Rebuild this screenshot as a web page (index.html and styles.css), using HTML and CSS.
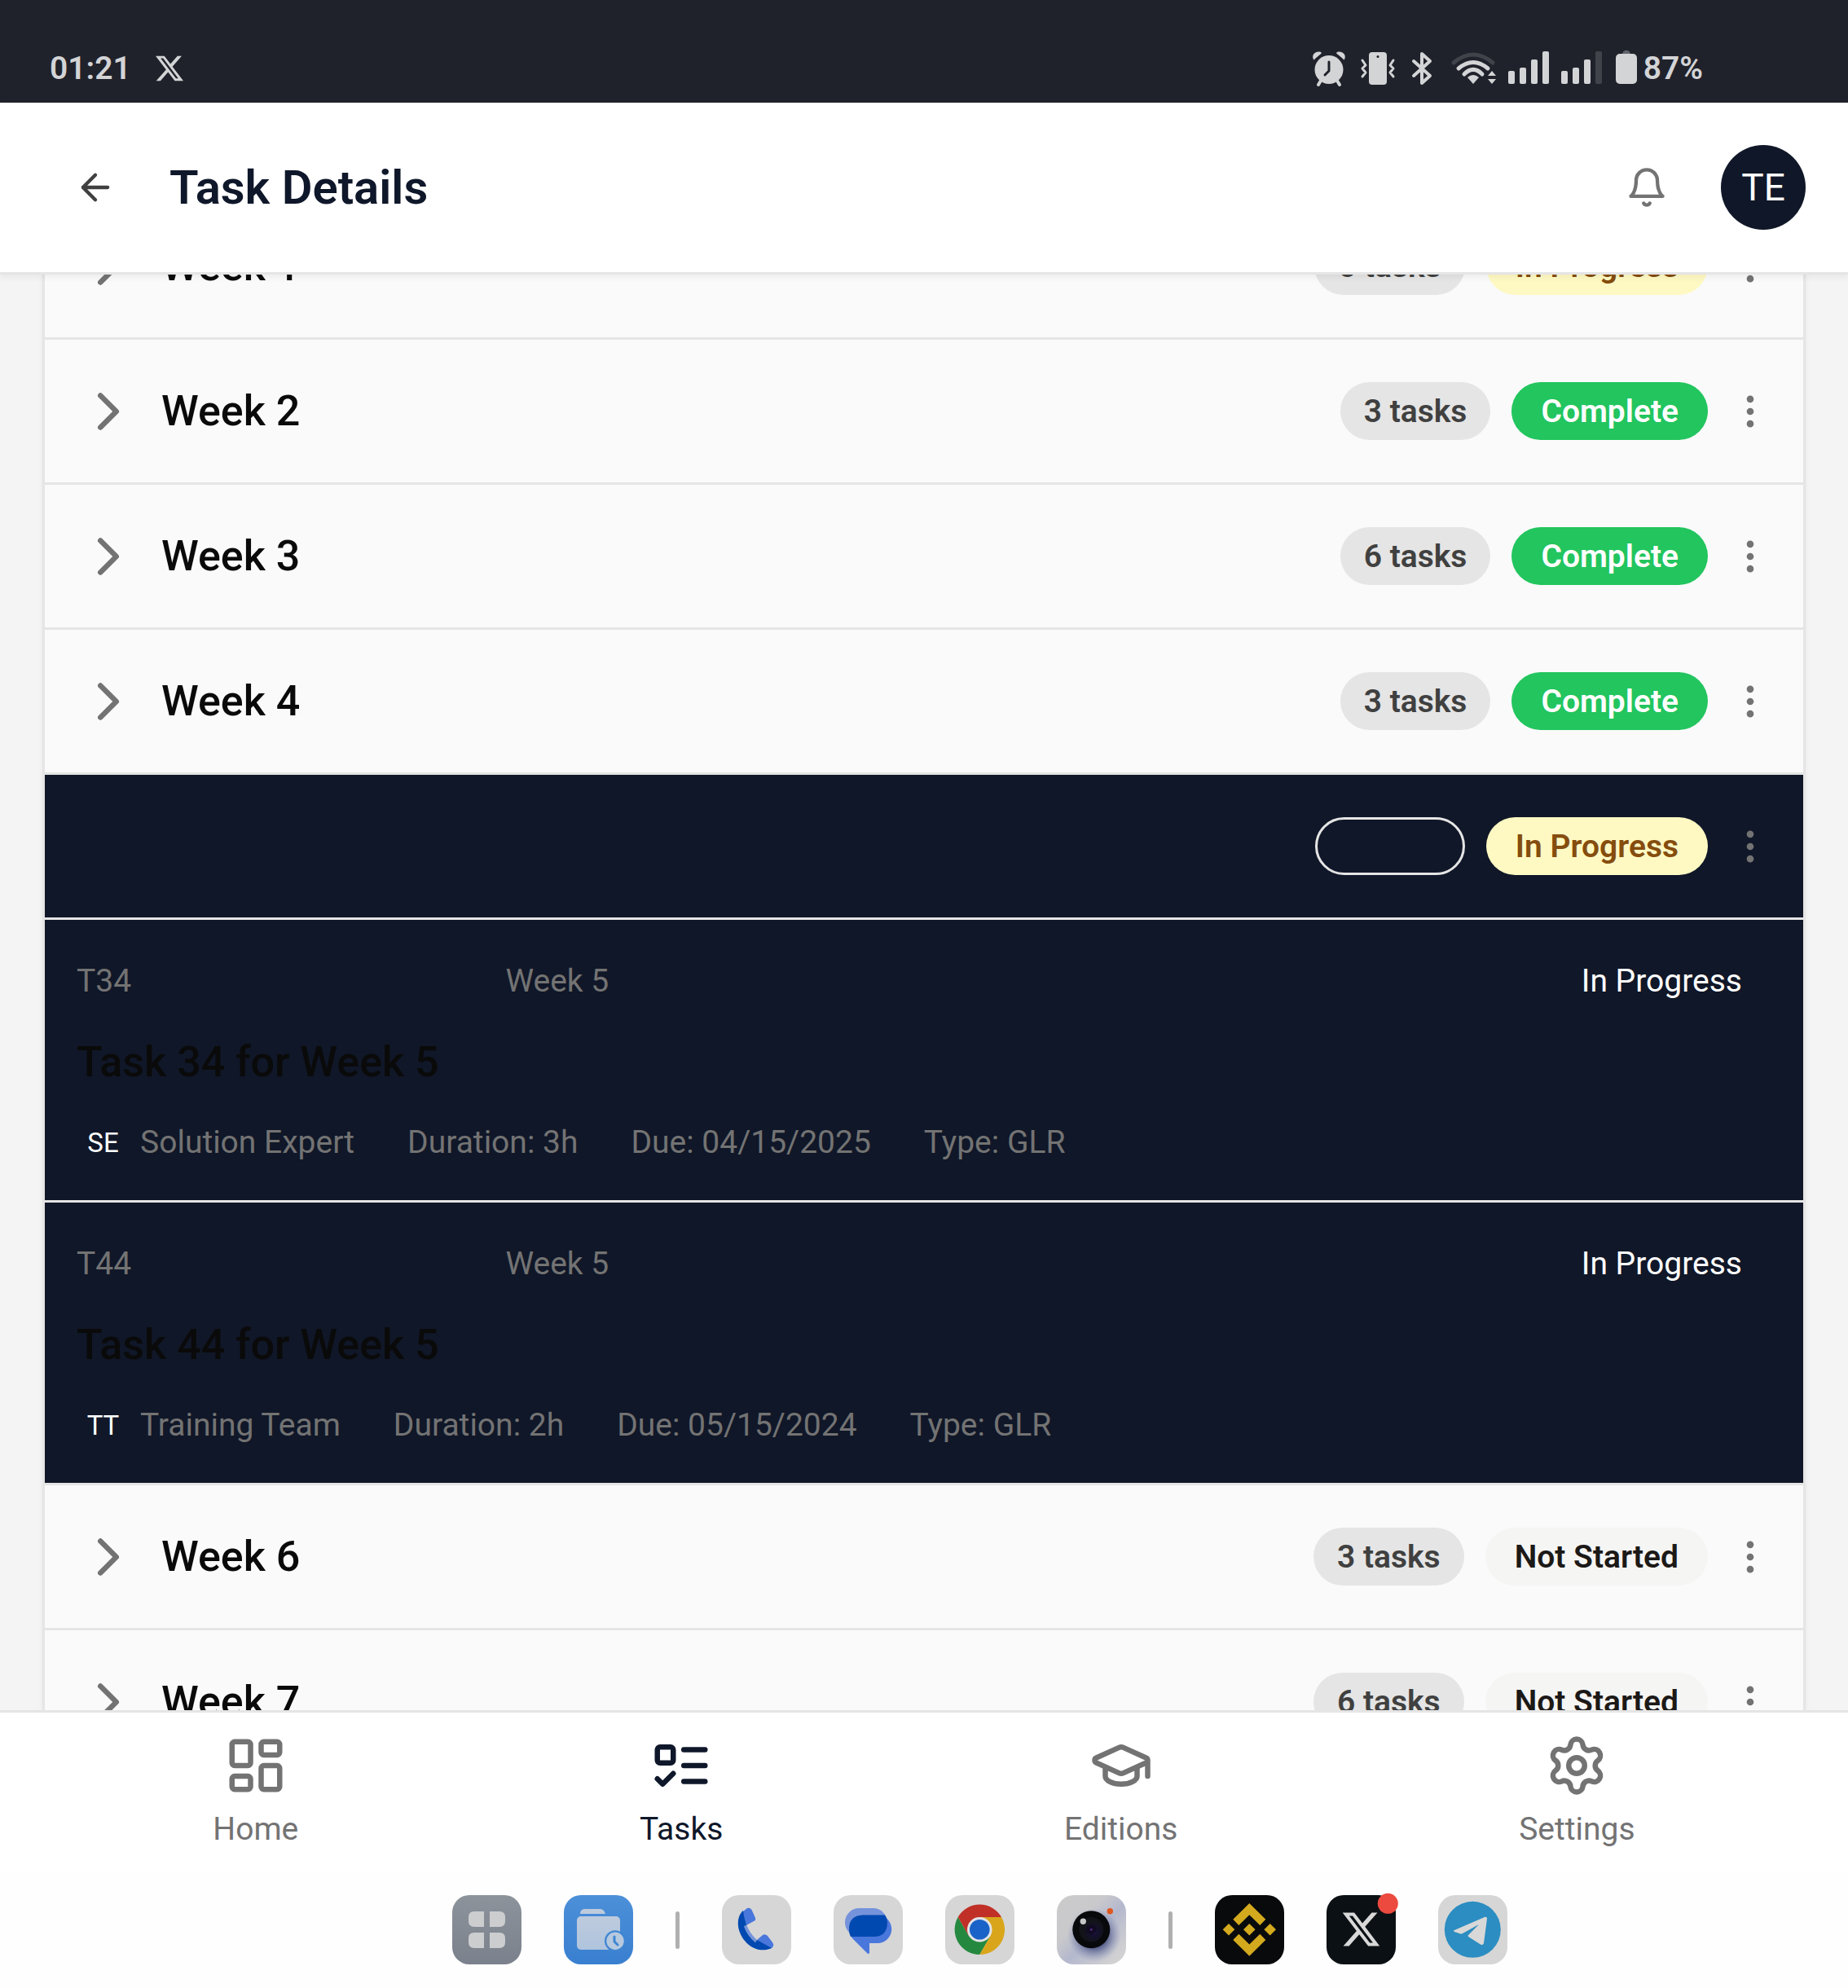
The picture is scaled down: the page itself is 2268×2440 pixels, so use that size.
FILE: index.html
```html
<!DOCTYPE html>
<html lang="en">
<head>
<meta charset="utf-8">
<meta name="viewport" content="width=device-width, initial-scale=1">
<title>Task Details</title>
<link rel="stylesheet" href="styles.css">
</head>
<body>
<svg class="sprite" aria-hidden="true">
  <symbol id="chevron" viewBox="0 0 24 24"><path d="m9 18 6-6-6-6"/></symbol>
  <symbol id="more" viewBox="0 0 24 24"><circle cx="12" cy="12" r="1"/><circle cx="12" cy="5" r="1"/><circle cx="12" cy="19" r="1"/></symbol>
  <symbol id="x-logo" viewBox="0 1 24 22"><path d="M18.901 1.153h3.68l-8.04 9.19L24 22.846h-7.406l-5.8-7.584-6.638 7.584H.474l8.6-9.83L0 1.154h7.594l5.243 6.932ZM17.61 20.644h2.039L6.486 3.24H4.298Z"/></symbol>
</svg>

<div class="status">
  <span class="time">01:21</span>
  <svg class="status-x" width="34" height="32"><use href="#x-logo"/></svg>
  <div class="status-icons">
    <svg width="45" height="44" viewBox="0 0 45 44">
      <circle cx="22" cy="23.500" r="17.500"/>
      <path d="M3 11C0 5 6 0 12 2c2 1 0 2-1 3L5 10c-1 1-1 2-2 1ZM41 11c3-6-3-11-9-9-2 1 0 2 1 3l6 5c1 1 1 2 2 1Z"/>
      <path class="line" d="m12 37-3 5m23-5 3 5"/>
      <path class="line cut" d="M22 14v11l-5 5"/>
    </svg>
    <svg width="44" height="44" viewBox="0 0 44 44">
      <rect x="11" y="2" width="22" height="40" rx="4"/><circle class="hole" cx="22" cy="7.500" r="1.500"/>
      <path class="line thin" d="m3 12 4 6-4 4 4 5-4 5M41 12l-4 6 4 4-4 5 4 5"/>
    </svg>
    <svg width="36" height="44" viewBox="0 0 36 44"><path class="line" d="m7 13 20 18-10 9V4l10 9L7 31"/></svg>
    <svg width="57" height="44" viewBox="0 0 57 44">
      <path class="line wide dim" d="M5 15Q29-5 53 15"/>
      <path class="line wide" d="M11 22Q29 7 47 22M18 29q11-11 22 0"/>
      <path d="M22 33q7-6 14 0l-7 8ZM47 31l5-6 5 6ZM47 35l5 6 5-6Z"/>
    </svg>
    <svg width="50" height="44" viewBox="0 0 50 44"><rect y="25" width="8" height="16" rx="2"/><rect x="14" y="21" width="8" height="20" rx="2"/><rect x="28" y="11" width="8" height="30" rx="2"/><rect x="42" y="1" width="8" height="40" rx="2"/></svg>
    <svg width="50" height="44" viewBox="0 0 50 44"><rect y="25" width="8" height="16" rx="2"/><rect x="14" y="21" width="8" height="20" rx="2"/><rect x="28" y="11" width="8" height="30" rx="2"/><rect class="dim-fill" x="42" y="1" width="8" height="40" rx="2"/></svg>
    <div class="battery">
      <svg width="30" height="44" viewBox="0 0 30 44"><path class="dim-fill nub" d="M10 5c0-7 10-7 10 0Z"/><rect x="2" y="4" width="26" height="37" rx="5"/></svg>
      <span>87%</span>
    </div>
  </div>
</div>

<header class="header">
  <button class="icon-button back" type="button" aria-label="Back"><svg class="icon" viewBox="0 0 24 24"><path d="m12 19-7-7 7-7M19 12H5"/></svg></button>
  <h1>Task Details</h1>
  <button class="icon-button bell" type="button" aria-label="Notifications"><svg class="icon" viewBox="0 0 24 24"><path d="M6 8a6 6 0 0 1 12 0c0 7 3 9 3 9H3s3-2 3-9M10.300 21a1.940 1.940 0 0 0 3.400 0"/></svg></button>
  <button class="avatar" type="button">TE</button>
</header>

<main class="content">
  <div class="weeks">
    <section class="week">
      <button class="toggle" type="button"><svg class="chevron"><use href="#chevron"/></svg>Week 1</button>
      <span class="pill count">6 tasks</span><span class="pill progress">In Progress</span>
      <button class="menu" type="button" aria-label="More"><svg class="icon"><use href="#more"/></svg></button>
    </section>
    <section class="week">
      <button class="toggle" type="button"><svg class="chevron"><use href="#chevron"/></svg>Week 2</button>
      <span class="pill count">3 tasks</span><span class="pill complete">Complete</span>
      <button class="menu" type="button" aria-label="More"><svg class="icon"><use href="#more"/></svg></button>
    </section>
    <section class="week">
      <button class="toggle" type="button"><svg class="chevron"><use href="#chevron"/></svg>Week 3</button>
      <span class="pill count">6 tasks</span><span class="pill complete">Complete</span>
      <button class="menu" type="button" aria-label="More"><svg class="icon"><use href="#more"/></svg></button>
    </section>
    <section class="week">
      <button class="toggle" type="button"><svg class="chevron"><use href="#chevron"/></svg>Week 4</button>
      <span class="pill count">3 tasks</span><span class="pill complete">Complete</span>
      <button class="menu" type="button" aria-label="More"><svg class="icon"><use href="#more"/></svg></button>
    </section>
    <section class="week open">
      <span class="pill outline"></span><span class="pill progress">In Progress</span>
      <button class="menu" type="button" aria-label="More"><svg class="icon"><use href="#more"/></svg></button>
    </section>
    <article class="task">
      <div class="task-top"><span>T34</span><span>Week 5</span><span class="task-status">In Progress</span></div>
      <h2>Task 34 for Week 5</h2>
      <div class="meta"><span class="owner"><span class="initials">SE</span>Solution Expert</span><span>Duration: 3h</span><span>Due: 04/15/2025</span><span>Type: GLR</span></div>
    </article>
    <article class="task">
      <div class="task-top"><span>T44</span><span>Week 5</span><span class="task-status">In Progress</span></div>
      <h2>Task 44 for Week 5</h2>
      <div class="meta"><span class="owner"><span class="initials">TT</span>Training Team</span><span>Duration: 2h</span><span>Due: 05/15/2024</span><span>Type: GLR</span></div>
    </article>
    <section class="week">
      <button class="toggle" type="button"><svg class="chevron"><use href="#chevron"/></svg>Week 6</button>
      <span class="pill count">3 tasks</span><span class="pill idle">Not Started</span>
      <button class="menu" type="button" aria-label="More"><svg class="icon"><use href="#more"/></svg></button>
    </section>
    <section class="week">
      <button class="toggle" type="button"><svg class="chevron"><use href="#chevron"/></svg>Week 7</button>
      <span class="pill count">6 tasks</span><span class="pill idle">Not Started</span>
      <button class="menu" type="button" aria-label="More"><svg class="icon"><use href="#more"/></svg></button>
    </section>
  </div>
</main>

<nav class="tabs">
  <a href="#home"><svg viewBox="0 0 24 24"><rect width="7" height="9" x="3" y="3" rx="1"/><rect width="7" height="5" x="14" y="3" rx="1"/><rect width="7" height="9" x="14" y="12" rx="1"/><rect width="7" height="5" x="3" y="16" rx="1"/></svg>Home</a>
  <a href="#tasks" class="active" aria-current="page"><svg viewBox="0 0 24 24"><rect x="3" y="5" width="6" height="6" rx="1"/><path d="m3 17 2 2 4-4M13 6h8M13 12h8M13 18h8"/></svg>Tasks</a>
  <a href="#editions"><svg viewBox="0 0 24 24"><path d="M21.420 10.922a1 1 0 0 0-.019-1.838L12.830 5.180a2 2 0 0 0-1.660 0L2.600 9.080a1 1 0 0 0 0 1.832l8.570 3.908a2 2 0 0 0 1.660 0zM22 10v6M6 12.500V16a6 3 0 0 0 12 0v-3.500"/></svg>Editions</a>
  <a href="#settings"><svg viewBox="0 0 24 24"><path d="M9.671 4.136a2.340 2.340 0 0 1 4.659 0 2.340 2.340 0 0 0 3.319 1.915 2.340 2.340 0 0 1 2.330 4.033 2.340 2.340 0 0 0 0 3.831 2.340 2.340 0 0 1-2.330 4.033 2.340 2.340 0 0 0-3.319 1.915 2.340 2.340 0 0 1-4.659 0 2.340 2.340 0 0 0-3.320-1.915 2.340 2.340 0 0 1-2.330-4.033 2.340 2.340 0 0 0 0-3.831A2.340 2.340 0 0 1 6.350 6.051a2.340 2.340 0 0 0 3.319-1.915"/><circle cx="12" cy="12" r="3"/></svg>Settings</a>
</nav>

<footer class="dock">
  <button class="app" type="button" aria-label="Apps"><svg viewBox="0 0 85 85">
    <defs><linearGradient id="g-apps" x2="0" y2="1"><stop stop-color="#8c939b"/><stop offset="1" stop-color="#7a818c"/></linearGradient></defs>
    <rect width="85" height="85" rx="21" fill="url(#g-apps)"/>
    <path d="M27 20h12v19H27q-7 0-7-7v-5q0-7 7-7ZM46 20h12q7 0 7 7v5q0 7-7 7H46ZM27 46h12v19H27q-7 0-7-7v-5q0-7 7-7ZM46 46h12q7 0 7 7v5q0 7-7 7H46Z" fill="#cccdcf"/>
  </svg></button>
  <button class="app" type="button" aria-label="Files"><svg viewBox="0 0 85 85">
    <defs><linearGradient id="g-files" x2="0" y2="1"><stop stop-color="#4c90d8"/><stop offset="1" stop-color="#397fd0"/></linearGradient><linearGradient id="g-folder" x2="0" y2="1"><stop stop-color="#becbdd"/><stop offset="1" stop-color="#afc4dd"/></linearGradient></defs>
    <rect width="85" height="85" rx="21" fill="url(#g-files)"/>
    <path d="M20 23q0-6 6-6h19q4 0 6 6Z" fill="#becbdd"/>
    <rect x="16" y="26" width="53" height="41" rx="5" fill="url(#g-folder)"/>
    <circle cx="63" cy="56.300" r="13" fill="#3f85d2"/><circle cx="63" cy="56.300" r="10.700" fill="#b7c9df"/>
    <path d="M62 51v6l4 4" fill="none" stroke="#3f85d2" stroke-width="3" stroke-linecap="round" stroke-linejoin="round"/>
  </svg></button>
  <span class="divider"></span>
  <button class="app" type="button" aria-label="Phone"><svg viewBox="0 0 85 85">
    <rect width="85" height="85" rx="21" fill="#d6d6d6"/>
    <path d="M27 38 30 36Q34 47 43 55l-2 3Q31 50 27 38Z" fill="#7593db"/>
    <path d="M26 20 31 16q4-1 6 3l4 9q1 3-2 4l-9 5-4-8ZM43 55l7-6q3-2 6 1l6 8q3 4-1 7l-9 2Z" fill="#4a77dc"/>
    <path d="M26 19C17 27 18 44 28 56c9 11 22 14 33 9L43 55l-2 3Q31 50 27 38l3-1Q27 28 26 19Z" fill="#0049b0"/>
  </svg></button>
  <button class="app" type="button" aria-label="Messages"><svg viewBox="0 0 85 85">
    <rect width="85" height="85" rx="21" fill="#d6d6d6"/>
    <rect x="14" y="16" width="52" height="35" rx="17.500" fill="#7593db"/>
    <path d="M36 24.500h18a17 17 0 0 1 0 34.500H44v12q-1 2-3 0L24 54q-5-5-5-12 0-17 17-17.500Z" fill="#4a77dc"/>
    <path d="M36 24.500h27q3 4 3 9Q66 51 49 51H21q-2-4-2-9 0-17 17-17.500Z" fill="#0049b0"/>
  </svg></button>
  <button class="app" type="button" aria-label="Chrome"><svg viewBox="0 0 85 85">
    <rect width="85" height="85" rx="21" fill="#d6d6d6"/>
    <path d="M42.300 73A30.700 30.700 0 0 1 15.700 27L29 50h26.600Z" fill="#24893f"/>
    <path d="M42.300 27H69a30.700 30.700 0 0 1-26.700 46l13.300-23Z" fill="#d9a51a"/>
    <path d="M15.700 27A30.700 30.700 0 0 1 69 27H42.300L29 50Z" fill="#c03027"/>
    <circle cx="42.300" cy="42.300" r="15.300" fill="#e3e3e5"/><circle cx="42.300" cy="42.300" r="12.300" fill="#1963c8"/>
  </svg></button>
  <button class="app" type="button" aria-label="Camera"><svg viewBox="0 0 85 85">
    <defs><linearGradient id="g-cam" x2="1" y2="1"><stop stop-color="#cbcbcb"/><stop offset=".35" stop-color="#c9c9cc"/><stop offset=".55" stop-color="#b4b8cd"/><stop offset=".85" stop-color="#cfcfd2"/><stop offset="1" stop-color="#d6d6d6"/></linearGradient>
    <radialGradient id="g-shade"><stop offset=".5" stop-color="#5d6690"/><stop offset="1" stop-color="#8f97bb" stop-opacity="0"/></radialGradient>
    <radialGradient id="g-lens" cx=".6" cy=".6"><stop stop-color="#3d1a75"/><stop offset=".25" stop-color="#14102e"/><stop offset="1" stop-color="#121316"/></radialGradient></defs>
    <rect width="85" height="85" rx="21" fill="url(#g-cam)"/>
    <circle cx="46" cy="49" r="33" fill="url(#g-shade)"/>
    <circle cx="42.300" cy="42.300" r="23" fill="#08090b"/><circle cx="42.300" cy="42.300" r="15" fill="url(#g-lens)"/><circle cx="42.300" cy="42.300" r="6" fill="#110a20"/><circle cx="42.300" cy="42.300" r="1.500" fill="#4f2a80"/>
    <circle cx="32.300" cy="32.300" r="3.700" fill="#c6c6c6"/><circle cx="65.300" cy="19.700" r="3.700" fill="#e0571f"/>
  </svg></button>
  <span class="divider"></span>
  <button class="app" type="button" aria-label="Binance"><svg viewBox="0 0 85 85">
    <rect width="85" height="85" rx="21" fill="#090a0c"/>
    <path d="m42.300 10 20 19.700-7 7.300-13-12.700-13 12.700-7-7.300ZM42.300 74.700l20-19.700-7-7.300-13 12.700-13-12.700-7 7.300ZM42.300 35l7.300 7.300-7.300 7.300-7.300-7.300ZM17 35l7.300 7.300-7.300 7.300-7.300-7.300ZM67.700 35l7.300 7.300-7.300 7.300-7.300-7.300Z" fill="#d3a91e"/>
  </svg></button>
  <button class="app" type="button" aria-label="X"><svg viewBox="0 0 85 85">
    <rect width="85" height="85" rx="21" fill="#0b1014"/>
    <use href="#x-logo" x="19.700" y="21" width="45.500" height="42" fill="#d8d8d8"/>
    <circle cx="75.300" cy="10.300" r="12.500" fill="#ec4a3f"/>
  </svg></button>
  <button class="app" type="button" aria-label="Telegram"><svg viewBox="0 0 85 85">
    <rect width="85" height="85" rx="21" fill="#d6d6d6"/>
    <circle cx="42.300" cy="42.300" r="34.500" fill="#2b8dc1"/>
    <path d="M20 43 57 27q3-1 3 2l-4 30q-1 3-4 1.500L37 51q-1-1 0-2l13-13-20 11q-2 1-4 0l-6-2q-2-1 0-2Z" fill="#d8d8d8"/>
  </svg></button>
</footer>
</body>
</html>
```
FILE: styles.css
```css
* { box-sizing: border-box; }

body {
  margin: 0;
  height: 100vh;
  display: flex;
  flex-direction: column;
  overflow: hidden;
  background: #f4f4f4;
  color: #0a0a0a;
  font-family: Roboto, "Liberation Sans", sans-serif;
  font-size: 39px;
  line-height: 52px;
}

button {
  margin: 0;
  padding: 0;
  border: 0;
  background: none;
  color: inherit;
  font: inherit;
}

svg { display: block; flex: none; overflow: visible; }
.sprite { display: none; }

.icon,
.chevron,
.tabs svg {
  fill: none;
  stroke: currentColor;
  stroke-width: 2;
  stroke-linecap: round;
  stroke-linejoin: round;
}

.icon { width: 52px; height: 52px; }
.chevron, .tabs svg { width: 78px; height: 78px; }

/* System status bar */
.status {
  flex: none;
  display: flex;
  align-items: center;
  gap: 30px;
  padding: 42px 178px 0 61px;
  height: 126px;
  background: #20222b;
  color: #d3d4d6;
  font-weight: 600;
}

.status svg { fill: #d3d4d6; }
.status-icons { display: flex; align-items: center; gap: 15px; margin-left: auto; }
.battery { display: flex; align-items: center; gap: 6px; }
.status .line { fill: none; stroke: #d3d4d6; stroke-width: 4; stroke-linecap: round; stroke-linejoin: round; }
.status .thin { stroke-width: 3; }
.status .wide { stroke-width: 5; }
.status .cut { stroke: #20222b; stroke-width: 3; }
.status .dim { stroke: #41434b; }
.status .hole { fill: #20222b; }
.status .dim-fill { fill: #41434b; }
.status .nub { fill: #62646c; }

/* App header */
.header {
  flex: none;
  z-index: 1;
  display: flex;
  align-items: center;
  gap: 26px;
  padding: 52px;
  border-bottom: 3px solid #e5e5e5;
  background: #fff;
  box-shadow: 0 3px 8px rgba(0, 0, 0, .06);
}

.header h1 {
  flex: 1;
  margin: 0;
  color: #0f172a;
  font-size: 58px;
  font-weight: 600;
  line-height: 78px;
}

.icon-button { display: flex; justify-content: center; width: 130px; }
.back { color: #404040; }
.bell { color: #737373; }

.avatar {
  width: 104px;
  height: 104px;
  border-radius: 50%;
  background: #101728;
  color: #fff;
  font-size: 46px;
}

/* Week list */
.content { flex: 1; min-height: 0; overflow: hidden; }

.weeks {
  margin: -98px 52px 0;
  border: solid #e5e5e5;
  border-width: 0 3px;
  background: #fafafa;
  box-shadow: 0 3px 6px rgba(0, 0, 0, .06);
}

.week {
  display: flex;
  align-items: center;
  justify-content: flex-end;
  gap: 26px;
  height: 178px;
  padding: 0 39px;
  border-bottom: 3px solid #e5e5e5;
}

.toggle {
  flex: 1;
  display: flex;
  align-items: center;
  gap: 26px;
  font-size: 52px;
  font-weight: 500;
  line-height: 78px;
}

.chevron, .menu { color: #737373; }

.pill {
  padding: 7px 33px 5px;
  border: 3px solid transparent;
  border-radius: 36px;
  font-weight: 600;
  line-height: 53px;
}

.count { padding: 7px 26px 5px; background: #e5e5e5; color: #404040; }
.outline { width: 184px; height: 71px; border-color: #e5e5e5; }
.complete { background: #22c55e; color: #fff; }
.progress { background: #fef9c3; color: #854d0e; }
.idle { background: #f5f5f4; color: #1c1917; }

.open, .task { background: #101728; }

.task {
  padding: 40px 39px 38px;
  border-bottom: 3px solid #e5e5e5;
  color: #737373;
}

.task-top {
  display: grid;
  grid-template-columns: 1fr 2fr 1fr;
  gap: 13px;
  line-height: 71px;
}

.task-status { padding-right: 36px; color: #fff; text-align: right; }

.task h2 {
  margin: 25px 0 27px;
  color: #0a0a0a;
  font-size: 52px;
  font-weight: 500;
  line-height: 78px;
}

.meta { display: flex; gap: 65px; line-height: 65px; }
.owner { display: flex; gap: 13px; }
.initials { width: 65px; color: #fff; font-size: 33px; text-align: center; }

/* Tab bar */
.tabs {
  flex: none;
  display: flex;
  justify-content: space-around;
  padding: 26px 52px;
  border-top: 3px solid #e5e5e5;
  background: #fff;
}

.tabs a {
  display: flex;
  flex-direction: column;
  align-items: center;
  gap: 13px;
  color: #737373;
  text-decoration: none;
}

.tabs .active { color: #0f172a; }

/* System dock */
.dock {
  flex: none;
  display: flex;
  align-items: center;
  justify-content: center;
  gap: 52px;
  padding: 29px 0 29px 137px;
  background: #fefefe;
}

.app, .app svg { width: 85px; height: 85px; }
.divider { width: 5px; height: 46px; border-radius: 3px; background: #b0b0b0; }
```
